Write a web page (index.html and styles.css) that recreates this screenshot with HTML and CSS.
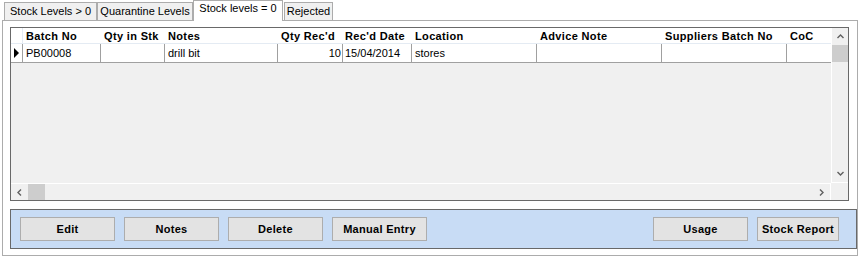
FILE: index.html
```html
<!DOCTYPE html>
<html lang="en">
<head>
  <meta charset="UTF-8">
  <title>Stock Levels</title>
  <link rel="stylesheet" href="styles.css">
</head>
<body>
  <!-- Tab strip -->
  <div class="tabs">
    <div class="tab t1">Stock Levels &gt; 0</div>
    <div class="tab t2">Quarantine Levels</div>
    <div class="tab t3 active">Stock levels = 0</div>
    <div class="tab t4">Rejected</div>
  </div>

  <div class="panel">
    <!-- Data grid -->
    <div class="grid">
      <div class="grid-body">
        <div class="row head">
          <div class="cell c0"></div>
          <div class="cell c1">Batch No</div>
          <div class="cell c2">Qty in Stk</div>
          <div class="cell c3">Notes</div>
          <div class="cell c4">Qty Rec'd</div>
          <div class="cell c5">Rec'd Date</div>
          <div class="cell c6">Location</div>
          <div class="cell c7">Advice Note</div>
          <div class="cell c8">Suppliers Batch No</div>
          <div class="cell c9">CoC</div>
        </div>
        <div class="row data">
          <div class="cell c0"><span class="arrow"></span></div>
          <div class="cell c1">PB00008</div>
          <div class="cell c2"></div>
          <div class="cell c3">drill bit</div>
          <div class="cell c4 num">10</div>
          <div class="cell c5">15/04/2014</div>
          <div class="cell c6">stores</div>
          <div class="cell c7"></div>
          <div class="cell c8"></div>
          <div class="cell c9"></div>
        </div>
      </div>
      <div class="vscroll">
        <div class="sbtn">
          <svg width="7" height="5" viewBox="0 0 7 5"><path d="M0.5 4 L3.5 1 L6.5 4" fill="none" stroke="#606060" stroke-width="1.4"/></svg>
        </div>
        <div class="thumb"></div>
        <div class="track"></div>
        <div class="sbtn">
          <svg width="7" height="5" viewBox="0 0 7 5"><path d="M0.5 1 L3.5 4 L6.5 1" fill="none" stroke="#606060" stroke-width="1.4"/></svg>
        </div>
      </div>
      <div class="hscroll">
        <div class="sbtn">
          <svg width="5" height="7" viewBox="0 0 5 7"><path d="M4 0.5 L1 3.5 L4 6.5" fill="none" stroke="#606060" stroke-width="1.4"/></svg>
        </div>
        <div class="thumb"></div>
        <div class="track"></div>
        <div class="sbtn">
          <svg width="5" height="7" viewBox="0 0 5 7"><path d="M1 0.5 L4 3.5 L1 6.5" fill="none" stroke="#606060" stroke-width="1.4"/></svg>
        </div>
      </div>
      <div class="corner"></div>
    </div>

    <!-- Action buttons -->
    <div class="actions">
      <button class="btn">Edit</button>
      <button class="btn">Notes</button>
      <button class="btn">Delete</button>
      <button class="btn">Manual Entry</button>
      <div class="spacer"></div>
      <button class="btn">Usage</button>
      <button class="btn narrow">Stock Report</button>
    </div>
  </div>
</body>
</html>
```

FILE: styles.css
```css
:root {
  --tab-border: #acacac;
  --grid-border: #696969;
  --cell-line: #a0a0a0;
  --head-line: #e4ebf3;
  --face: #f0f0f0;
  --blue: #c8dcf5;
  --font-stack: "Liberation Sans", Arial, sans-serif;
}
* {box-sizing: border-box; margin: 0; padding: 0;}
body {
  font-family: var(--font-stack);
  font-size: 11px;
  color: #000;
  background: #fff;
  width: 860px;
  height: 259px;
  overflow: hidden;
}

/* Tabs */
.tabs {display: flex; align-items: flex-start; height: 20px; padding-left: 4px;}
.tab {
  height: 18px;
  margin-top: 2px;
  border: 1px solid var(--tab-border);
  border-bottom: none;
  background: var(--face);
  text-align: center;
  line-height: 16px;
}
.tab.t1 {width: 93px;}
.tab.t2 {width: 96px;}
.tab.t3 {width: 90px;}
.tab.t4 {width: 49px; margin-left: 1px;}
.tab.active {
  height: 21px;
  margin-top: 0;
  margin-bottom: -1px;
  background: #fff;
  line-height: 15px;
  position: relative;
  z-index: 1;
}

/* Outer panel */
.panel {
  margin: 0 2px;
  height: 236px;
  border: 1px solid var(--tab-border);
  background: #fff;
  padding: 6px 0 0 7px;
}

/* Grid */
.grid {
  width: 839px;
  height: 174px;
  border: 1px solid var(--grid-border);
  background: var(--face);
  display: grid;
  grid-template-columns: 820px 17px;
  grid-template-rows: 155px 17px;
}
.grid-body {overflow: hidden;}
.row {display: flex; width: 900px;}
.row.head {height: 16px; background: #fff; border-bottom: 1px solid var(--head-line);}
.row.data {height: 19px; background: #fff;}
.cell {
  flex: none;
  padding: 0 3px;
  white-space: nowrap;
  overflow: hidden;
}
.head .cell {font-weight: bold; line-height: 16px; letter-spacing: .35px; border-right: 1px solid #fff;}
.head .c0 {border-right-color: var(--head-line);}
.data .cell {line-height: 18px; border-right: 1px solid var(--cell-line); border-bottom: 1px solid var(--cell-line);}
.cell.num {text-align: right; padding-right: 1px;}
.c0 {width: 12px; padding: 0;}
.c1 {width: 78px;}
.c2 {width: 64px;}
.c3 {width: 113px;}
.c4 {width: 65px;}
.c5 {width: 69px; padding-left: 2px;}
.c6 {width: 125px;}
.c7 {width: 125px;}
.c8 {width: 125px;}
.c9 {width: 80px;}
.data .c5 {padding-left: 2px;}
.arrow {
  display: block;
  width: 0; height: 0;
  margin: 4px 0 0 3px;
  border-top: 5px solid transparent;
  border-bottom: 5px solid transparent;
  border-left: 5px solid #000;
}

/* Scrollbars */
.vscroll {
  display: flex;
  flex-direction: column;
  border-left: 1px solid #fff;
  border-bottom: 1px solid #fff;
}
.vscroll .sbtn {height: 17px; display: flex; align-items: center; justify-content: center;}
.vscroll .thumb {height: 17px; background: #cdcdcd;}
.vscroll .track {flex: 1;}
.hscroll {display: flex; border-top: 1px solid #fff; border-right: 1px solid #fff;}
.hscroll .sbtn {width: 17px; display: flex; align-items: center; justify-content: center;}
.hscroll .thumb {width: 17px; background: #cdcdcd;}
.hscroll .track {flex: 1;}

/* Buttons */
.actions {
  display: flex;
  gap: 9px;
  width: 847px;
  height: 40px;
  margin-top: 8px;
  border: 1px solid var(--grid-border);
  background: var(--blue);
  padding: 7px 17px 7px 9px;
}
.spacer {flex: 1;}
.btn {
  width: 95px;
  height: 24px;
  border: 1px solid #adadad;
  background: #e3e3e3;
  font-family: var(--font-stack);
  font-size: 11px;
  font-weight: bold;
  letter-spacing: .3px;
  color: #000;
}
.btn.narrow {width: 82px;}
```
